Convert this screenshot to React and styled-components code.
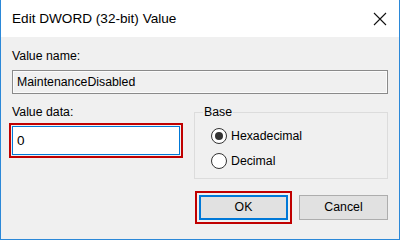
import styled, { createGlobalStyle } from "styled-components"

const Global = createGlobalStyle`
  html, body { margin: 0; padding: 0; background: #f0f0f0; }
  body { font-family: "Liberation Sans", Arial, sans-serif; }
`

const Window = styled.div`
  width: 400px;
  height: 240px;
  box-sizing: border-box;
  border: 1px solid #2b88d8;
  border-top: none;
  background: #f0f0f0;
  display: flex;
  flex-direction: column;
  color: #000;
`

const TitleBar = styled.div`
  height: 37px;
  flex-shrink: 0;
  background: #fff;
  display: flex;
  align-items: center;
  justify-content: space-between;
  padding: 0 12px 0 11px;
  font-size: 13.6px;
`

const CloseButton = styled.div`
  width: 14px;
  height: 14px;
  display: flex;
`

const Body = styled.div`
  flex: 1;
  padding: 12px 11px 0 11px;
  font-size: 12.3px;
  line-height: 15px;
`

const Label = styled.div`
  height: 15px;
`

const TextBox = styled.div`
  box-sizing: border-box;
  height: ${p => p.$height}px;
  margin-top: 6px;
  padding-left: 4px;
  display: flex;
  align-items: center;
  border: 1px solid ${p => (p.$focused ? "#0078d7" : "#8a8a8a")};
  background: ${p => (p.$focused ? "#fff" : "#f0f0f0")};
  box-shadow: ${p => (p.$focused ? "none" : "inset 0 0 0 1px #fbfbfb")};
  outline: ${p => (p.$marked ? "2px solid #c00000" : "none")};
  outline-offset: 1px;
  font-size: ${p => (p.$focused ? "13.5px" : "12.3px")};
`

const Row = styled.div`
  display: flex;
  justify-content: space-between;
  margin-top: 11px;
`

const LeftCol = styled.div`
  width: 168px;
`

const GroupBox = styled.fieldset`
  box-sizing: border-box;
  width: 194px;
  margin: 0;
  padding: 6px 0 7px 8px;
  border: 1px solid #dcdcdc;
`

const Legend = styled.legend`
  padding: 0 1px;
  line-height: 15px;
`

const RadioRow = styled.div`
  height: 20px;
  display: flex;
  align-items: center;
  gap: 4px;
  margin-left: 8px;
  & + & { margin-top: 5px; }
`

const RadioCircle = styled.span`
  box-sizing: border-box;
  width: 16px;
  height: 16px;
  border-radius: 50%;
  border: 1px solid #333;
  background: #fff;
  display: flex;
  align-items: center;
  justify-content: center;
  &::after {
    content: "";
    width: 8px;
    height: 8px;
    border-radius: 50%;
    background: ${p => (p.$checked ? "#333" : "transparent")};
  }
`

const ButtonRow = styled.div`
  display: flex;
  justify-content: flex-end;
  gap: 11px;
  margin-top: 16px;
`

const Button = styled.div`
  box-sizing: border-box;
  width: 89px;
  height: 25px;
  display: flex;
  align-items: center;
  justify-content: center;
  background: #e1e1e1;
  border: ${p => (p.$default ? "2px solid #0078d7" : "1px solid #adadad")};
  outline: ${p => (p.$marked ? "2px solid #c00000" : "none")};
  outline-offset: 2px;
  font-size: 12.3px;
`

export default function App() {
  return (
    <>
      <Global />
      <Window>
        <TitleBar>
          <span>Edit DWORD (32-bit) Value</span>
          <CloseButton>
            <svg width="14" height="14" viewBox="0 0 14 14">
              <path d="M1 1 L13 13 M13 1 L1 13" stroke="#111" strokeWidth="1.1" fill="none" />
            </svg>
          </CloseButton>
        </TitleBar>
        <Body>
          <Label>Value name:</Label>
          <TextBox $height={24}>MaintenanceDisabled</TextBox>
          <Row>
            <LeftCol>
              <Label>Value data:</Label>
              <TextBox $height={29} $focused $marked>0</TextBox>
            </LeftCol>
            <GroupBox>
              <Legend>Base</Legend>
              <RadioRow>
                <RadioCircle $checked />
                <span>Hexadecimal</span>
              </RadioRow>
              <RadioRow>
                <RadioCircle />
                <span>Decimal</span>
              </RadioRow>
            </GroupBox>
          </Row>
          <ButtonRow>
            <Button $default $marked>OK</Button>
            <Button>Cancel</Button>
          </ButtonRow>
        </Body>
      </Window>
    </>
  )
}
